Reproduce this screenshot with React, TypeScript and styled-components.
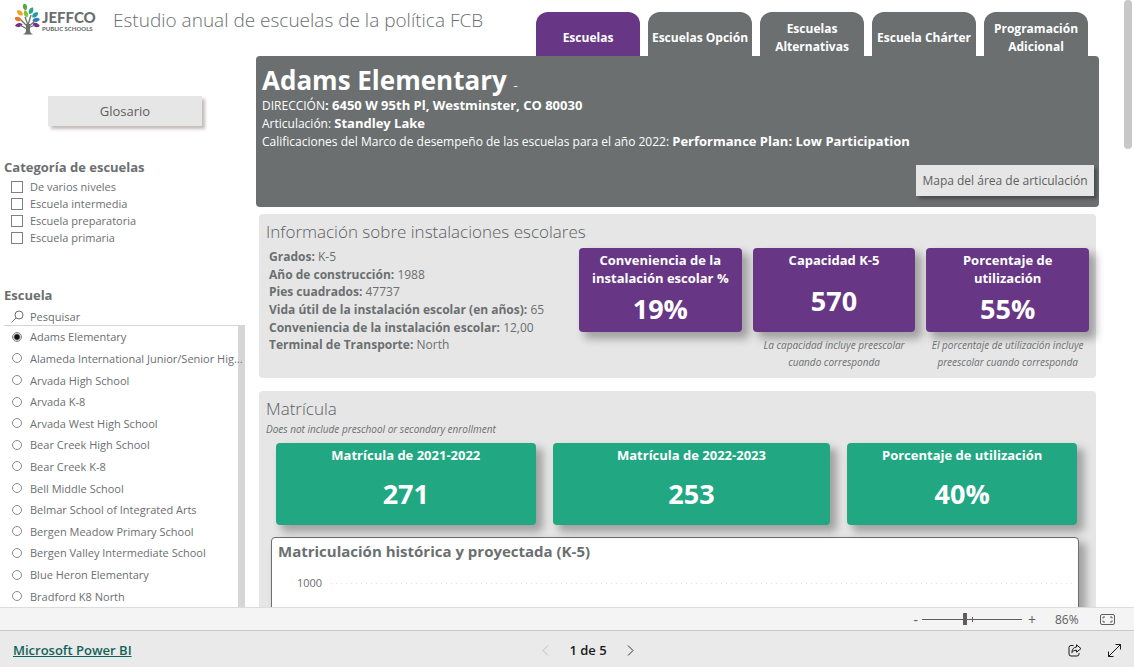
import React, { useState } from "react";
import styled, { createGlobalStyle, css } from "styled-components";

const GRAY = "#6b6f70";
const PURPLE = "#673785";
const GREEN = "#22a783";
const PANEL = "#e6e6e6";

const GlobalStyle = createGlobalStyle`
  * { box-sizing: border-box; }
  body { margin: 0; font-family: "Open Sans", "Noto Sans", sans-serif; font-size: 12px; color: ${GRAY}; background: #fff; }
  button, input { font-family: inherit; }
  h1, h2, h3, p, ul { margin: 0; padding: 0; }
`;

const Page = styled.div`
  height: 100vh;
  display: flex;
  flex-direction: column;
`;

const Report = styled.div`
  position: relative;
  flex: 1;
  min-height: 0;
  display: grid;
  grid-template-columns: 256px minmax(0, 1fr);
  grid-template-rows: 56px minmax(0, 1fr);
  padding-right: 35px;
  overflow: hidden;
`;

const ScrollThumb = styled.div`
  position: absolute;
  top: 0;
  right: 2px;
  width: 8px;
  height: 149px;
  border-radius: 4px;
  background: #c8c8c8;
`;

const Header = styled.header`
  grid-column: 1 / -1;
  display: flex;
  align-items: flex-start;
  padding: 4px 11px 0 15px;
`;

const Brand = styled.div`
  display: flex;
  gap: 2px;
  width: 98px;
  flex: none;
`;

const BrandText = styled.div`
  padding-top: 4px;
  font-family: Lato, sans-serif;
  font-weight: 900;
  white-space: nowrap;
`;

const BrandName = styled.div`
  font-size: 15px;
  line-height: 18px;
`;

const BrandSub = styled.div`
  font-size: 6px;
  line-height: 6px;
`;

const ReportTitle = styled.h1`
  flex: 1;
  font-size: 19px;
  font-weight: 300;
  line-height: 32px;
  white-space: nowrap;
`;

const Tabs = styled.nav`
  display: flex;
  gap: 8px;
  padding-top: 8px;
`;

const Tab = styled.button<{ $active?: boolean }>`
  width: 104px;
  height: 44px;
  padding: 8px 0 0;
  border: 0;
  border-radius: 12px 12px 0 0;
  background: ${(p) => (p.$active ? PURPLE : GRAY)};
  color: #fff;
  font-size: 12px;
  font-weight: 700;
  line-height: 18px;
`;

const Sidebar = styled.aside`
  display: flex;
  flex-direction: column;
  min-height: 0;
  padding: 40px 11px 0 4px;
`;

const grayButton = css`
  border: 0;
  background: ${PANEL};
  color: #5c5f60;
  white-space: nowrap;
`;

const GlossaryButton = styled.button`
  ${grayButton}
  flex: none;
  height: 30px;
  margin: 0 43px 0 44px;
  font-size: 13px;
  box-shadow: 3px 3px 3px rgba(60, 30, 30, 0.3);
`;

const SideHeading = styled.h2`
  font-size: 13px;
  font-weight: 700;
  line-height: 18px;
`;

const CategoryGroup = styled.section`
  flex: none;
  padding-top: 32px;
  height: 160px;
`;

const CategoryRow = styled.label`
  display: flex;
  align-items: center;
  gap: 7px;
  height: 17px;
  padding-left: 7px;
  font-size: 11px;
`;

const CategoryList = styled.div`
  padding-top: 2px;
`;

const Checkbox = styled.input`
  appearance: none;
  width: 12px;
  height: 12px;
  margin: 0;
  border: 1px solid #808080;
  background: #fff;
  &:checked { background: #605e5c; }
`;

const SchoolGroup = styled.section`
  flex: 1;
  min-height: 0;
  display: flex;
  flex-direction: column;
`;

const SearchRow = styled.label`
  flex: none;
  display: flex;
  align-items: center;
  gap: 6px;
  height: 22px;
  padding: 3px 0 0 7px;
  border-bottom: 1px solid #d4d4d4;
`;

const SearchInput = styled.input`
  flex: 1;
  min-width: 0;
  padding: 0;
  border: 0;
  outline: 0;
  background: transparent;
  font-size: 11px;
  color: ${GRAY};
  &::placeholder { color: ${GRAY}; opacity: 1; }
`;

const SchoolList = styled.div`
  flex: 1;
  min-height: 0;
  display: grid;
  grid-auto-rows: minmax(18px, 1fr);
  overflow: hidden;
  background: linear-gradient(#d6d6d6, #d6d6d6) right / 7px 100% no-repeat;
`;

const SchoolRow = styled.label`
  display: flex;
  align-items: center;
  gap: 8px;
  padding-left: 8px;
  font-size: 11px;
  white-space: nowrap;
`;

const Radio = styled.input`
  appearance: none;
  flex: none;
  width: 10px;
  height: 10px;
  margin: 0;
  border: 1px solid #8a8a8a;
  border-radius: 50%;
  background: #fff;
  &:checked { background: radial-gradient(circle, #111 0 2px, #fff 4px); }
`;

const Main = styled.main`
  display: flex;
  flex-direction: column;
  min-height: 0;
`;

const Hero = styled.section`
  flex: none;
  display: flex;
  flex-direction: column;
  height: 151px;
  padding: 7px 5px 11px 6px;
  border-radius: 4px;
  background: ${GRAY};
  color: #fff;
`;

const HeroTitle = styled.h2`
  font-size: 26px;
  font-weight: 700;
  line-height: 34px;
  white-space: nowrap;
`;

const HeroDash = styled.span`
  font-size: 13px;
  font-weight: 400;
  line-height: 1;
`;

const HeroLine = styled.p`
  font-size: 12px;
  line-height: 18px;
  white-space: nowrap;
  b { font-size: 13px; line-height: 1; }
`;

const MapButton = styled.button`
  ${grayButton}
  width: 178px;
  height: 31px;
  margin: auto 0 0 auto;
  padding: 0;
  font-size: 12px;
  box-shadow: 3px 3px 3px rgba(0, 0, 0, 0.3);
`;

const Panel = styled.section`
  flex: none;
  margin: 7px 3px 0;
  padding: 6px 7px 0;
  border-radius: 4px;
  background: ${PANEL};
`;

const FacilityPanel = styled(Panel)`
  height: 164px;
`;

const EnrollmentPanel = styled(Panel)`
  margin-top: 13px;
`;

const PanelTitle = styled.h3`
  font-size: 17px;
  font-weight: 300;
  line-height: 24px;
  color: #5c6061;
  white-space: nowrap;
`;

const FacilityBody = styled.div`
  display: grid;
  grid-template-columns: 310px minmax(0, 1fr);
  padding: 4px 0 0 3px;
`;

const Facts = styled.ul`
  display: grid;
  grid-auto-rows: 1fr;
  height: 106px;
  list-style: none;
  font-size: 12px;
  white-space: nowrap;
`;

const FacilityCards = styled.div`
  display: grid;
  grid-template-columns: repeat(3, minmax(0, 1fr));
  gap: 11px;
`;

const Card = styled.div<{ $color: string; $height: number }>`
  height: ${(p) => p.$height}px;
  padding: 3px 8px 0;
  border-radius: 4px;
  background: ${(p) => p.$color};
  color: #fff;
  text-align: center;
  box-shadow: 6px 6px 8px 1px rgba(0, 0, 0, 0.3);
`;

const CardLabel = styled.div`
  font-size: 13px;
  font-weight: 700;
  line-height: 18px;
`;

const CardValue = styled.div<{ $gap: number }>`
  padding-top: ${(p) => p.$gap}px;
  font-size: 27px;
  font-weight: 700;
  line-height: 34px;
`;

const Caption = styled.p`
  padding-top: 5px;
  font-size: 10px;
  font-style: italic;
  line-height: 17px;
  text-align: center;
  white-space: pre-line;
`;

const Note = styled.p`
  font-size: 10px;
  font-style: italic;
  line-height: 16px;
`;

const EnrollmentCards = styled.div`
  display: grid;
  grid-template-columns: 260fr 278fr 230fr;
  gap: 17px;
  padding: 6px 12px 0 10px;
`;

const Chart = styled.div`
  height: 240px;
  margin: 12px 10px 0 5px;
  padding: 3px 5px 0 6px;
  border: 1px solid ${GRAY};
  border-radius: 4px;
  background: #fff;
  box-shadow: 6px 6px 8px 1px rgba(0, 0, 0, 0.3);
`;

const ChartTitle = styled.h3`
  font-size: 15px;
  font-weight: 700;
  line-height: 20px;
`;

const AxisRow = styled.div`
  display: flex;
  align-items: center;
  gap: 9px;
  padding: 15px 0 0 19px;
  font-size: 11px;
  line-height: 14px;
`;

const GridLine = styled.div`
  flex: 1;
  height: 1px;
  background: repeating-linear-gradient(90deg, #dedede 0 1px, transparent 1px 5px);
`;

const ZoomBar = styled.div`
  flex: none;
  display: flex;
  align-items: center;
  justify-content: flex-end;
  height: 24px;
  padding-right: 19px;
  border-top: 1px solid #dcdcdc;
  border-bottom: 1px solid #c8c8c8;
  background: #f4f4f4;
  color: #605e5c;
`;

const IconButton = styled.button`
  display: inline-flex;
  align-items: center;
  justify-content: center;
  padding: 0;
  border: 0;
  background: none;
  color: inherit;
  font-size: 14px;
`;

const SliderWrap = styled.div`
  position: relative;
  display: flex;
  width: 100px;
  margin: 0 6px 0 4px;
`;

const Slider = styled.input`
  appearance: none;
  width: 100%;
  height: 12px;
  margin: 0;
  background: linear-gradient(#605e5c, #605e5c) center / 100% 1px no-repeat;
  &::-webkit-slider-thumb {
    appearance: none;
    width: 4px;
    height: 12px;
    background: #605e5c;
  }
`;

const SliderTick = styled.span`
  position: absolute;
  left: 50%;
  top: 4px;
  width: 1px;
  height: 5px;
  background: #605e5c;
`;

const ZoomValue = styled.span`
  width: 24px;
  margin: 0 21px 0 19px;
  font-size: 12px;
`;

const Footer = styled.footer`
  flex: none;
  display: grid;
  grid-template-columns: 1fr auto 1fr;
  align-items: center;
  height: 36px;
  padding: 2px 13px 0;
  background: #eaeaea;
  color: #1a1a1a;
`;

const FooterLink = styled.a`
  justify-self: start;
  color: #11635a;
  font-size: 13px;
  font-weight: 600;
`;

const Pager = styled.div`
  display: flex;
  align-items: center;
  gap: 20px;
  margin-left: 42px;
  font-size: 13px;
  font-weight: 600;
`;

const FooterActions = styled.div`
  justify-self: end;
  display: flex;
  gap: 26px;
`;

const leaves: [number, number, number, string][] = [
  [10, 3, -10, "#5aa63c"],
  [16, 7, 25, "#25a783"],
  [5, 9, -50, "#f0a32a"],
  [11, 10, -20, "#8bbf3f"],
  [20, 11, 50, "#1fa0a0"],
  [3, 15, -75, "#e77b25"],
  [21, 16, 80, "#2a7fc8"],
  [4, 21, -100, "#7a2c8c"],
  [21, 21, 110, "#7a2c8c"],
];

function TreeLogo() {
  return (
    <svg width="25" height="31" viewBox="0 0 25 31" aria-hidden="true">
      {leaves.map(([x, y, r, c]) => (
        <path key={`${x}-${y}`} d="M0-4C3-1.6 2.6 1.9 0 3.6C-2.6 1.9-3-1.6 0-4Z" fill={c} transform={`translate(${x} ${y}) rotate(${r})`} />
      ))}
      <path d="M13 30V21M13 23L6 16M13 21L10 13M13 21L16 11M13 23L20 17M12 25L5 21M13 24L20 21" stroke={GRAY} strokeWidth="1.3" fill="none" />
      <path d="M11 20H15L15 27Q15.4 29.5 18 30.5H8Q10.6 29.5 11 27Z" fill={GRAY} />
    </svg>
  );
}

const categories = ["De varios niveles", "Escuela intermedia", "Escuela preparatoria", "Escuela primaria"];

const schools = [
  "Adams Elementary",
  "Alameda International Junior/Senior Hig...",
  "Arvada High School",
  "Arvada K-8",
  "Arvada West High School",
  "Bear Creek High School",
  "Bear Creek K-8",
  "Bell Middle School",
  "Belmar School of Integrated Arts",
  "Bergen Meadow Primary School",
  "Bergen Valley Intermediate School",
  "Blue Heron Elementary",
  "Bradford K8 North",
];

const tabs = ["Escuelas", "Escuelas Opción", "Escuelas Alternativas", "Escuela Chárter", "Programación Adicional"];

const facts = [
  ["Grados:", "K-5"],
  ["Año de construcción:", "1988"],
  ["Pies cuadrados:", "47737"],
  ["Vida útil de la instalación escolar (en años):", "65"],
  ["Conveniencia de la instalación escolar:", "12,00"],
  ["Terminal de Transporte:", "North"],
];

const facilityCards = [
  { label: "Conveniencia de la instalación escolar %", value: "19%", gap: 5, caption: "" },
  { label: "Capacidad K-5", value: "570", gap: 15, caption: "La capacidad incluye preescolar\ncuando corresponda" },
  { label: "Porcentaje de utilización", value: "55%", gap: 5, caption: "El porcentaje de utilización incluye\npreescolar cuando corresponda" },
];

const enrollmentCards = [
  ["Matrícula de 2021-2022", "271"],
  ["Matrícula de 2022-2023", "253"],
  ["Porcentaje de utilización", "40%"],
];

export default function App() {
  const [school, setSchool] = useState(schools[0]);
  const [tab, setTab] = useState(tabs[0]);

  return (
    <Page>
      <GlobalStyle />
      <Report>
        <Header>
          <Brand>
            <TreeLogo />
            <BrandText>
              <BrandName>JEFFCO</BrandName>
              <BrandSub>PUBLIC SCHOOLS</BrandSub>
            </BrandText>
          </Brand>
          <ReportTitle>Estudio anual de escuelas de la política FCB</ReportTitle>
          <Tabs>
            {tabs.map((t) => (
              <Tab key={t} $active={t === tab} onClick={() => setTab(t)}>{t}</Tab>
            ))}
          </Tabs>
        </Header>

        <Sidebar>
          <GlossaryButton>Glosario</GlossaryButton>
          <CategoryGroup>
            <SideHeading>Categoría de escuelas</SideHeading>
            <CategoryList>
              {categories.map((c) => (
                <CategoryRow key={c}>
                  <Checkbox type="checkbox" />
                  {c}
                </CategoryRow>
              ))}
            </CategoryList>
          </CategoryGroup>
          <SchoolGroup>
            <SideHeading>Escuela</SideHeading>
            <SearchRow>
              <svg width="13" height="13" viewBox="0 0 13 13" fill="none" stroke={GRAY} aria-hidden="true">
                <circle cx="8" cy="5" r="4" />
                <path d="M5 8L0.5 12.5" />
              </svg>
              <SearchInput type="text" placeholder="Pesquisar" aria-label="Pesquisar" />
            </SearchRow>
            <SchoolList role="radiogroup" aria-label="Escuela">
              {schools.map((s) => (
                <SchoolRow key={s}>
                  <Radio type="radio" name="school" checked={s === school} onChange={() => setSchool(s)} />
                  {s}
                </SchoolRow>
              ))}
            </SchoolList>
          </SchoolGroup>
        </Sidebar>

        <Main>
          <Hero>
            <HeroTitle>Adams Elementary <HeroDash>-</HeroDash></HeroTitle>
            <HeroLine>DIRECCIÓN<b>: 6450 W 95th Pl, Westminster, CO 80030</b></HeroLine>
            <HeroLine>Articulación: <b>Standley Lake</b></HeroLine>
            <HeroLine>Calificaciones del Marco de desempeño de las escuelas para el año 2022: <b>Performance Plan: Low Participation</b></HeroLine>
            <MapButton>Mapa del área de articulación</MapButton>
          </Hero>

          <FacilityPanel>
            <PanelTitle>Información sobre instalaciones escolares</PanelTitle>
            <FacilityBody>
              <Facts>
                {facts.map(([k, v]) => (
                  <li key={k}><b>{k}</b> {v}</li>
                ))}
              </Facts>
              <FacilityCards>
                {facilityCards.map((c) => (
                  <div key={c.label}>
                    <Card $color={PURPLE} $height={84}>
                      <CardLabel>{c.label}</CardLabel>
                      <CardValue $gap={c.gap}>{c.value}</CardValue>
                    </Card>
                    {c.caption && <Caption>{c.caption}</Caption>}
                  </div>
                ))}
              </FacilityCards>
            </FacilityBody>
          </FacilityPanel>

          <EnrollmentPanel>
            <PanelTitle>Matrícula</PanelTitle>
            <Note>Does not include preschool or secondary enrollment</Note>
            <EnrollmentCards>
              {enrollmentCards.map(([label, value]) => (
                <Card key={label} $color={GREEN} $height={82}>
                  <CardLabel>{label}</CardLabel>
                  <CardValue $gap={13}>{value}</CardValue>
                </Card>
              ))}
            </EnrollmentCards>
            <Chart>
              <ChartTitle>Matriculación histórica y proyectada (K-5)</ChartTitle>
              <AxisRow>
                1000
                <GridLine />
              </AxisRow>
            </Chart>
          </EnrollmentPanel>
        </Main>
        <ScrollThumb />
      </Report>

      <ZoomBar>
        <IconButton aria-label="Alejar">-</IconButton>
        <SliderWrap>
          <Slider type="range" min="0" max="100" defaultValue="43" aria-label="Zoom" />
          <SliderTick />
        </SliderWrap>
        <IconButton aria-label="Acercar">+</IconButton>
        <ZoomValue>86%</ZoomValue>
        <IconButton aria-label="Ajustar a la página">
          <svg width="15" height="11" viewBox="0 0 15 11" fill="none" stroke="currentColor">
            <rect x="0.5" y="0.5" width="14" height="10" rx="1.5" />
            <path d="M3 4.5V3H5M10 3H12V4.5M12 6.5V8H10M5 8H3V6.5" />
          </svg>
        </IconButton>
      </ZoomBar>

      <Footer>
        <FooterLink href="#">Microsoft Power BI</FooterLink>
        <Pager>
          <IconButton aria-label="Página anterior" disabled>
            <svg width="7" height="11" viewBox="0 0 7 11" fill="none" stroke="#bdbdbd"><path d="M6 0.5L1 5.5L6 10.5" /></svg>
          </IconButton>
          1 de 5
          <IconButton aria-label="Página siguiente">
            <svg width="7" height="11" viewBox="0 0 7 11" fill="none" stroke="#333"><path d="M1 0.5L6 5.5L1 10.5" /></svg>
          </IconButton>
        </Pager>
        <FooterActions>
          <IconButton aria-label="Compartir">
            <svg width="14" height="13" viewBox="0 0 14 13" fill="none" stroke="currentColor" strokeLinejoin="round">
              <path d="M5.5 1.5H3Q1 1.5 1 3.5V10Q1 12 3 12H9Q11 12 11 10V9" />
              <path d="M8.5 0.8L13 4.6L8.5 8.2V6.2Q5.5 6 3.8 8.6Q4.3 3.4 8.5 3Z" />
            </svg>
          </IconButton>
          <IconButton aria-label="Pantalla completa">
            <svg width="13" height="13" viewBox="0 0 13 13" fill="none" stroke="currentColor">
              <path d="M7.5 0.5H12.5V5.5M12.5 0.5L0.5 12.5M0.5 7.5V12.5H5.5" />
            </svg>
          </IconButton>
        </FooterActions>
      </Footer>
    </Page>
  );
}
